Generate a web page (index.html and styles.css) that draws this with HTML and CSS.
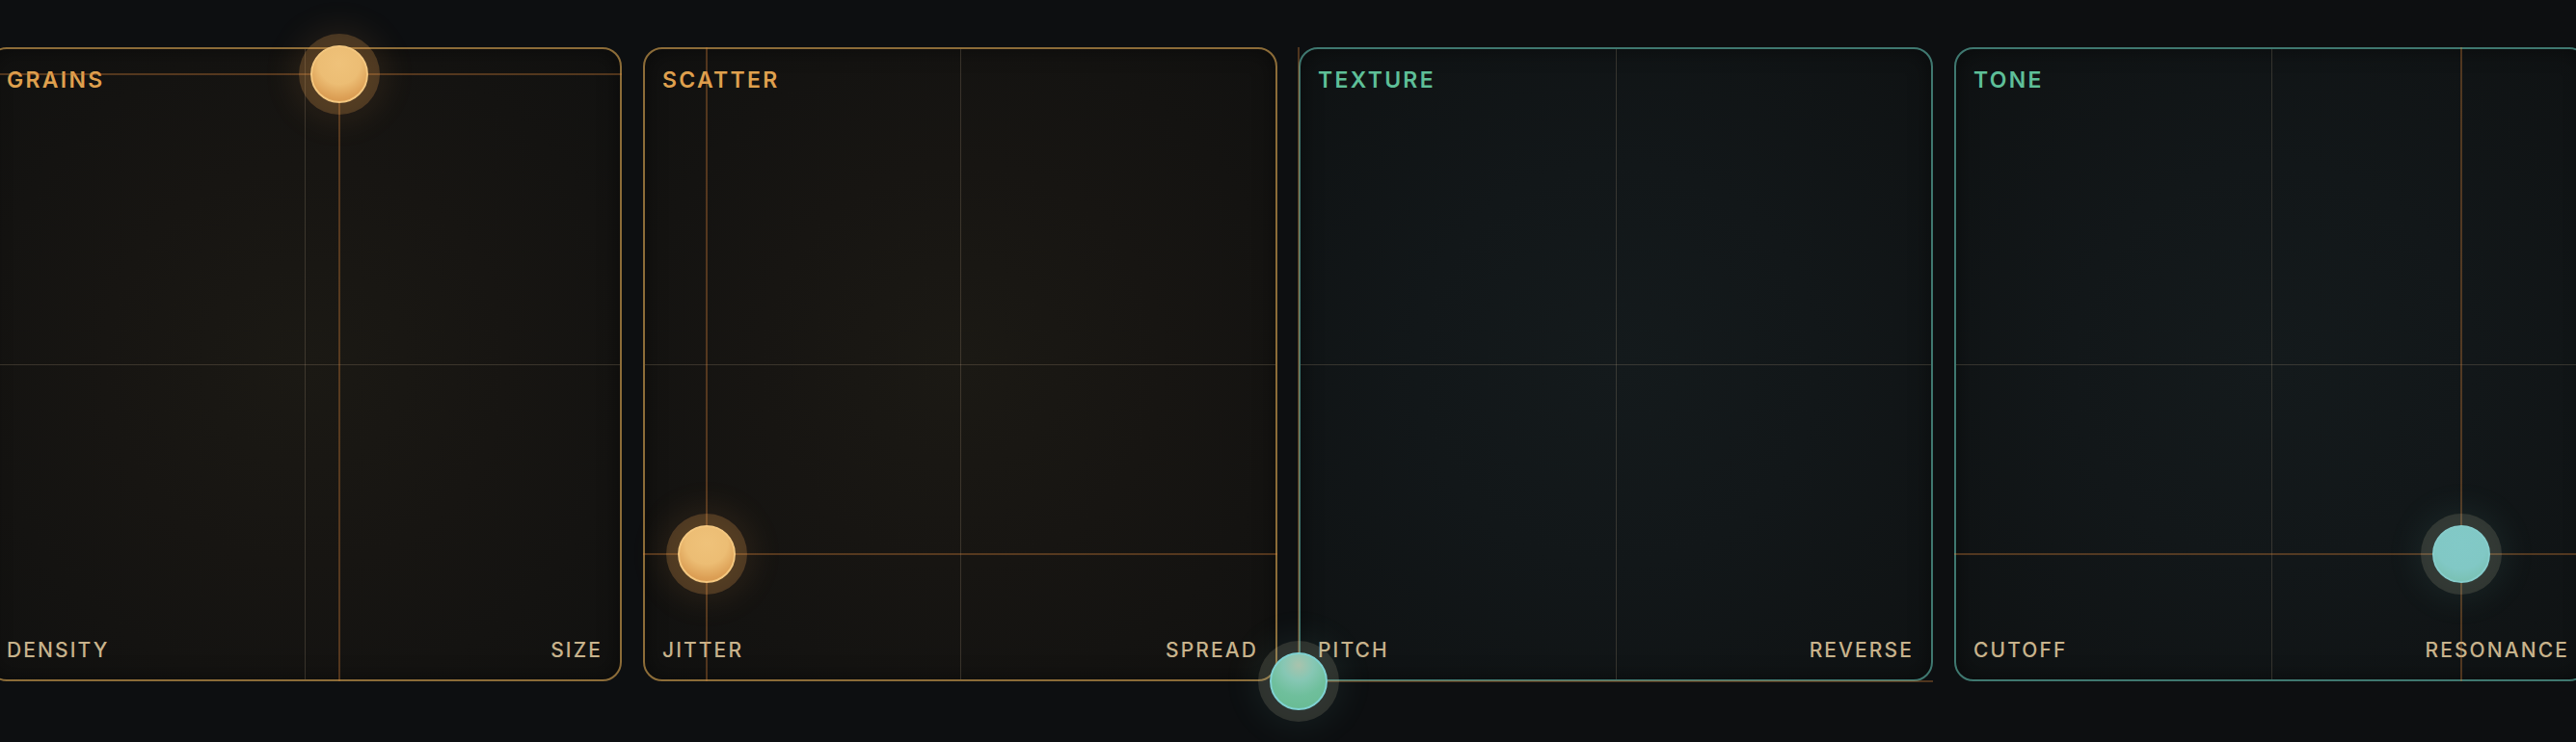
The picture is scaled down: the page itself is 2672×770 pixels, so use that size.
FILE: index.html
```html
<!DOCTYPE html>
<html lang="en">
<head>
<meta charset="utf-8">
<title>XY Pads</title>
<link rel="stylesheet" href="styles.css">
</head>
<body>
<main class="pads">
  <section class="pad pad-warm">
    <div class="pad-top"><span class="pad-title">GRAINS</span></div>
    <div class="pad-bottom"><span class="axis">DENSITY</span><span class="axis">SIZE</span></div>
    <div class="field" style="--x:55.5%;--y:4.26%">
      <span class="hline"></span><span class="vline"></span><span class="puck puck-gold"></span>
    </div>
  </section>
  <section class="pad pad-warm">
    <div class="pad-top"><span class="pad-title">SCATTER</span></div>
    <div class="pad-bottom"><span class="axis">JITTER</span><span class="axis">SPREAD</span></div>
    <div class="field" style="--x:10%;--y:80%">
      <span class="hline"></span><span class="vline"></span><span class="puck puck-gold"></span>
    </div>
  </section>
  <section class="pad pad-cool">
    <div class="pad-top"><span class="pad-title">TEXTURE</span></div>
    <div class="pad-bottom"><span class="axis">PITCH</span><span class="axis">REVERSE</span></div>
    <div class="field" style="--x:0%;--y:100%">
      <span class="hline"></span><span class="vline"></span><span class="puck puck-mint"></span>
    </div>
  </section>
  <section class="pad pad-cool">
    <div class="pad-top"><span class="pad-title">TONE</span></div>
    <div class="pad-bottom"><span class="axis">CUTOFF</span><span class="axis">RESONANCE</span></div>
    <div class="field" style="--x:80%;--y:80%">
      <span class="hline"></span><span class="vline"></span><span class="puck puck-teal"></span>
    </div>
  </section>
</main>
</body>
</html>
```

FILE: styles.css
```css
* { box-sizing: border-box; }

html, body {
  margin: 0;
  height: 770px;
  background: #0d0f11;
  overflow: hidden;
}

body {
  font-family: Inter, "Noto Sans", "Liberation Sans", sans-serif;
}

.pads {
  display: flex;
  justify-content: center;
  gap: 22px;
  padding-top: 49px;
}

.pad {
  position: relative;
  flex: 0 0 658px;
  height: 658px;
  border: 2px solid #8a6b38;
  border-radius: 20px;
  padding: 18px;
  display: flex;
  flex-direction: column;
  justify-content: space-between;
  box-shadow: inset 0 0 22px rgba(0, 0, 0, 0.45);
}

.pad-warm {
  border-color: #8c6c38;
  background: radial-gradient(circle at 50% 50%, #1b1914 0%, #171512 45%, #111110 100%);
}

.pad-cool {
  border-color: #3f7870;
  background: radial-gradient(circle at 50% 50%, #141a1c 0%, #121719 45%, #0f1213 100%);
}

/* center grid lines */
.pad::before,
.pad::after {
  content: "";
  position: absolute;
  background: rgba(190, 170, 135, 0.22);
}
.pad::before {
  left: 50%;
  top: 0;
  bottom: 0;
  width: 1px;
}
.pad::after {
  top: 50%;
  left: 0;
  right: 0;
  height: 1px;
}

.pad-top,
.pad-bottom {
  position: relative;
  z-index: 1;
  display: flex;
  justify-content: space-between;
  align-items: baseline;
}

.pad-title {
  font-size: 23px;
  font-weight: 600;
  letter-spacing: 0.1em;
  color: #dfa04e;
}

.pad-cool .pad-title {
  color: #5ebf98;
}

.axis {
  font-size: 21px;
  font-weight: 500;
  letter-spacing: 0.1em;
  color: #c8b38c;
}

.field {
  position: absolute;
  inset: -2px;
  pointer-events: none;
  z-index: 2;
}

.hline {
  position: absolute;
  left: 0;
  right: 0;
  top: var(--y);
  height: 2px;
  margin-top: -1px;
  background: rgba(215, 132, 58, 0.33);
}

.vline {
  position: absolute;
  top: 0;
  bottom: 0;
  left: var(--x);
  width: 2px;
  margin-left: -1px;
  background: rgba(215, 132, 58, 0.33);
}

.puck {
  position: absolute;
  left: var(--x);
  top: var(--y);
  width: 60px;
  height: 60px;
  margin: -30px 0 0 -30px;
  border-radius: 50%;
  border: 2px solid;
}

.puck-gold {
  border-color: #f4c77f;
  background: radial-gradient(circle at 50% 30%, #efc27a 0%, #ecbd74 45%, #dc9f55 75%, #d3924a 100%);
  box-shadow: 0 0 0 12px rgba(232, 160, 80, 0.24), 0 0 34px 18px rgba(232, 160, 80, 0.1);
}

.puck-mint {
  border-color: #80d2d2;
  background: radial-gradient(circle at 50% 20%, #a9c3ad 0%, #86c7b4 30%, #6fbf9c 60%, #66ba90 100%);
  box-shadow: 0 0 0 12px rgba(200, 190, 160, 0.16), 0 0 34px 18px rgba(120, 200, 190, 0.08);
}

.puck-teal {
  border-color: #86cccb;
  background: radial-gradient(circle at 50% 30%, #82c9c7 0%, #81c8c5 55%, #79c0b2 85%, #76bdac 100%);
  box-shadow: 0 0 0 12px rgba(200, 190, 160, 0.16), 0 0 34px 18px rgba(120, 200, 190, 0.08);
}
```
